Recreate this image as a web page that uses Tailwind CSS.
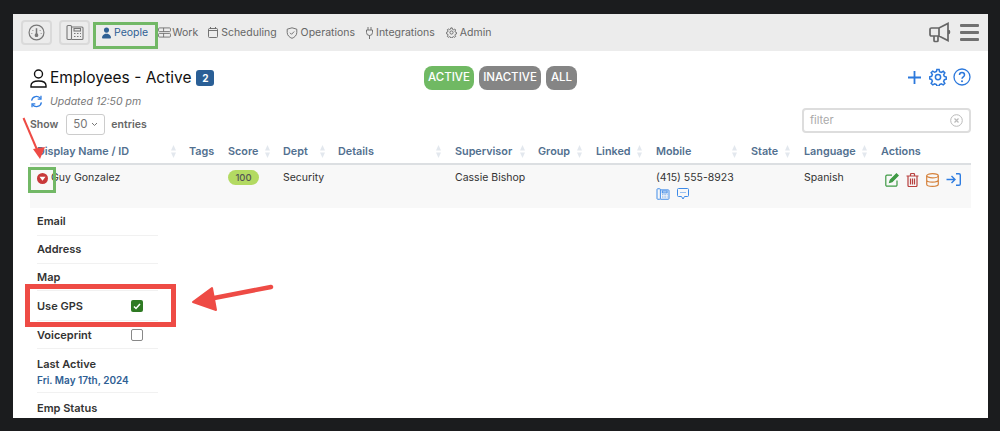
<!DOCTYPE html>
<html lang="en">
<head>
  <meta charset="UTF-8">
  <meta name="viewport" content="width=device-width, initial-scale=1.0">
  <title>Employees - Active</title>
  <script src="https://cdn.jsdelivr.net/npm/@tailwindcss/browser@4"></script>
</head>
<body class="bg-[#1b1c1e] h-[431px] overflow-hidden font-['Inter',sans-serif] text-[#333]">

  <div class="relative ml-[13px] mt-[14px] w-[975px] h-[404px] bg-white overflow-hidden">

    <!-- Top nav -->
    <nav class="h-[37px] bg-[#ececec] flex items-center pl-[8px] pr-[9px] text-[10.500px] text-[#666]">
      <button class="w-[31px] h-[25px] border-2 border-[#dadada] rounded-[4px] flex items-center justify-center">
        <svg class="w-[17px] h-[17px]" viewBox="0 0 16 16" fill="none" stroke="#777" stroke-width="1.100"><circle cx="8" cy="8" r="7"/><path d="M8 9.500V4M4.500 6v.5M11.500 6v.5M3.500 9v.5M12.500 9v.5" stroke-width="1.400"/><circle cx="8" cy="10.500" r="1.200" fill="#777"/></svg>
      </button>
      <button class="ml-[7px] w-[31px] h-[25px] border-2 border-[#dadada] rounded-[4px] flex items-center justify-center">
        <svg class="w-[18px] h-[17px]" viewBox="0 0 18 16" fill="none" stroke="#777" stroke-width="1.100"><rect x="1" y="1" width="4.500" height="14" rx="1"/><path d="M5.500 2.500H16a1 1 0 0 1 1 1V14a1 1 0 0 1-1 1H5.500"/><rect x="8" y="4" width="6.500" height="2.500"/><path d="M8 9h1.500M11 9h1.500M14 9h1M8 12h1.500M11 12h1.500M14 12h1"/></svg>
      </button>
      <a class="ml-[11px] flex items-center text-[#2f6094]">
        <svg class="w-[11px] h-[12px]" viewBox="0 0 16 16" fill="#2f6094"><path d="M3 16s-1.500 0-1.500-1.500S3 9 8 9s6.500 4 6.500 5.500S13 16 13 16H3z"/><circle cx="8" cy="3.800" r="3.700"/></svg>
        <span class="ml-[2px]">People</span>
      </a>
      <a class="ml-[10px] flex items-center">
        <svg class="w-[13px] h-[11px]" viewBox="0 0 14 12" fill="none" stroke="#666" stroke-width="0.9"><rect x="0.5" y="1" width="13" height="4" rx="1"/><rect x="0.5" y="7" width="13" height="4" rx="1"/><path d="M6 1v4M6 7v4"/></svg>
        <span class="ml-[1px]">Work</span>
      </a>
      <a class="ml-[10px] flex items-center">
        <svg class="w-[10px] h-[11px]" viewBox="0 0 10 11" fill="none" stroke="#666" stroke-width="0.9"><rect x="0.5" y="1.500" width="9" height="9" rx="1"/><path d="M0.500 3.500h9M2.500 0v2M7.500 0v2"/></svg>
        <span class="ml-[3px]">Scheduling</span>
      </a>
      <a class="ml-[9px] flex items-center">
        <svg class="w-[12px] h-[12px]" viewBox="0 0 12 12" fill="none" stroke="#666" stroke-width="0.9"><path d="M6 .8 1.200 2.200v3.300C1.200 8.400 3.500 10.400 6 11.300c2.500-.9 4.800-2.900 4.800-5.800V2.200L6 .8z"/><path d="m4 5.800 1.500 1.500L8.200 4.500"/></svg>
        <span class="ml-[3px]">Operations</span>
      </a>
      <a class="ml-[11px] flex items-center">
        <svg class="w-[7px] h-[12px]" viewBox="0 0 7 12" fill="none" stroke="#666" stroke-width="0.9"><path d="M2 0v3M5 0v3M.5 3h6v2.500a3 3 0 0 1-6 0V3zM3.500 8.500V12"/></svg>
        <span class="ml-[3px]">Integrations</span>
      </a>
      <a class="ml-[11px] flex items-center">
        <svg class="w-[11px] h-[11px]" viewBox="0 0 24 24" fill="none" stroke="#666" stroke-width="2"><circle cx="12" cy="12" r="3.500"/><path d="M10.500 2h3l.6 3 2.300 1 2.600-1.600 2.100 2.100L19.500 9l1 2.300 2.500.7v3l-2.500.6-1 2.300 1.600 2.600-2.100 2-2.600-1.500-2.300 1-.6 2h-3l-.6-2-2.300-1-2.600 1.500-2.100-2L4.500 17.600l-1-2.300L1 14.700v-3l2.500-.7 1-2.300-1.600-2.500L5 4.100l2.600 1.600 2.300-1 .6-2.700z"/></svg>
        <span class="ml-[3px]">Admin</span>
      </a>
      <div class="ml-auto flex items-center gap-[8px]">
        <svg class="w-[23px] h-[21px]" viewBox="0 0 23 21" fill="none" stroke="#666" stroke-width="1.700"><path d="M1 7.500a1.500 1.500 0 0 1 1.500-1.500H10l9-4.500v17L10 14H2.500A1.500 1.500 0 0 1 1 12.500v-5zM10 6v8M5 14v4.500a1 1 0 0 0 1 1h2a1 1 0 0 0 1-1V14M19 8c2 .5 2 3.500 0 4"/></svg>
        <svg class="w-[19px] h-[17px]" viewBox="0 0 19 17" fill="#707070"><rect width="19" height="3" rx="1"/><rect y="7" width="19" height="3" rx="1"/><rect y="14" width="19" height="3" rx="1"/></svg>
      </div>
    </nav>

    <!-- Page heading -->
    <div class="relative pl-[17px] pr-[17px] h-[56px]">
      <div class="flex items-center pt-[15px]">
        <svg class="w-[17px] h-[19px]" viewBox="0 0 17 19" fill="none" stroke="#111" stroke-width="1.400"><circle cx="8.500" cy="5" r="4"/><path d="M1 18v-1.500C1 13.500 4 12 8.500 12s7.500 1.500 7.500 4.500V18H1z"/></svg>
        <h1 class="ml-[3px] text-[15.500px] leading-[24px] text-[#111]">Employees - Active</h1>
        <span class="ml-[5px] w-[18px] h-[16px] rounded-[3px] bg-[#2a5f96] text-white text-[10px] font-bold flex items-center justify-center">2</span>
      </div>
      <div class="flex items-center mt-[4px] text-[10.500px] italic text-[#777]">
        <svg class="w-[13px] h-[13px]" viewBox="0 0 16 16" fill="none" stroke="#2f7de1" stroke-width="1.600"><path d="M2 7a6 6 0 0 1 11-2.500M14 9a6 6 0 0 1-11 2.500"/><path d="M13.500 1v4h-4M2.500 15v-4h4"/></svg>
        <span class="ml-[7px]">Updated 12:50 pm</span>
      </div>

      <div class="absolute left-[411px] top-[15px] flex gap-[5px] text-[11.500px] font-medium text-white">
        <span class="w-[50px] h-[24px] rounded-[8px] bg-[#70b963] flex items-center justify-center">ACTIVE</span>
        <span class="w-[62px] h-[24px] rounded-[8px] bg-[#858585] flex items-center justify-center">INACTIVE</span>
        <span class="w-[31px] h-[24px] rounded-[8px] bg-[#858585] flex items-center justify-center">ALL</span>
      </div>

      <div class="absolute right-[17px] top-[17px] flex items-center gap-[6px]">
        <svg class="w-[17px] h-[17px]" viewBox="0 0 17 17" stroke="#2b78dc" stroke-width="1.800"><path d="M8.500 2v13M2 8.500h13"/></svg>
        <svg class="w-[18px] h-[18px]" viewBox="0 0 24 24" fill="none" stroke="#2b78dc" stroke-width="2"><circle cx="12" cy="12" r="3.500"/><path d="M10.500 2h3l.6 3 2.300 1 2.600-1.600 2.100 2.100L19.500 9l1 2.300 2.500.7v3l-2.500.6-1 2.300 1.600 2.600-2.100 2-2.600-1.500-2.300 1-.6 2h-3l-.6-2-2.300-1-2.600 1.500-2.100-2L4.500 17.600l-1-2.300L1 14.700v-3l2.500-.7 1-2.300-1.600-2.500L5 4.100l2.600 1.600 2.300-1 .6-2.700z"/></svg>
        <svg class="w-[18px] h-[18px]" viewBox="0 0 18 18" fill="none" stroke="#2b78dc" stroke-width="1.300"><circle cx="9" cy="9" r="8"/><path d="M6.500 7c0-3.200 5-3.200 5 0 0 2-2.500 1.800-2.500 3.800" stroke-width="1.500"/><circle cx="9" cy="13.300" r="1" fill="#2b78dc" stroke="none"/></svg>
      </div>
    </div>

    <!-- Length + filter -->
    <div class="flex items-start justify-between pl-[17px] pr-[17px] h-[29px] text-[10.500px] font-semibold text-[#666]">
      <div class="flex items-center mt-[7px]">
        <span>Show</span>
        <div class="ml-[8px] w-[39px] h-[21px] border border-[#ccc] rounded-[3px] flex items-center justify-between px-[6px] text-[11.500px] font-normal text-[#777]">
          <span>50</span>
          <svg class="w-[7px] h-[5px]" viewBox="0 0 7 5" fill="none" stroke="#777"><path d="m1 1 2.500 2.500L6 1"/></svg>
        </div>
        <span class="ml-[6px]">entries</span>
      </div>
      <div class="mt-[1px] w-[169px] h-[25px] border-2 border-[#ddd] rounded-[4px] flex items-center justify-between pl-[6px] pr-[6px] font-normal text-[#aaa] text-[11px]">
        <span>filter</span>
        <svg class="w-[13px] h-[13px]" viewBox="0 0 13 13" fill="none" stroke="#bbb"><circle cx="6.500" cy="6.500" r="5.800"/><path d="m4.500 4.500 4 4m0-4-4 4" stroke-width="1.200"/></svg>
      </div>
    </div>

    <!-- Table -->
    <div class="ml-[17px] w-[941px]">
      <div class="grid grid-cols-[159px_39px_55px_55px_117px_83px_58px_60px_95px_53px_77px_90px] h-[29px] items-center border-b-2 border-[#dcdfe2] pt-[5px] text-[10.800px] font-semibold text-[#52708f]">
        <div class="flex justify-between pl-[7px] pr-[13px]"><span>Display Name / ID</span><svg class="w-[5px] h-[13px] mt-[1px]" viewBox="0 0 5 13" fill="#e3e8ee"><path d="M2.500 0 5 5.500H0zM2.500 13 0 7.500h5z"/></svg></div>
        <div>Tags</div>
        <div class="flex justify-between pr-[13px]"><span>Score</span><svg class="w-[5px] h-[13px] mt-[1px]" viewBox="0 0 5 13" fill="#e3e8ee"><path d="M2.500 0 5 5.500H0zM2.500 13 0 7.500h5z"/></svg></div>
        <div class="flex justify-between pr-[13px]"><span>Dept</span><svg class="w-[5px] h-[13px] mt-[1px]" viewBox="0 0 5 13" fill="#e3e8ee"><path d="M2.500 0 5 5.500H0zM2.500 13 0 7.500h5z"/></svg></div>
        <div class="flex justify-between pr-[14px]"><span>Details</span><svg class="w-[5px] h-[13px] mt-[1px]" viewBox="0 0 5 13" fill="#e3e8ee"><path d="M2.500 0 5 5.500H0zM2.500 13 0 7.500h5z"/></svg></div>
        <div class="flex justify-between pr-[13px]"><span>Supervisor</span><svg class="w-[5px] h-[13px] mt-[1px]" viewBox="0 0 5 13" fill="#e3e8ee"><path d="M2.500 0 5 5.500H0zM2.500 13 0 7.500h5z"/></svg></div>
        <div class="flex justify-between pr-[14px]"><span>Group</span><svg class="w-[5px] h-[13px] mt-[1px]" viewBox="0 0 5 13" fill="#e3e8ee"><path d="M2.500 0 5 5.500H0zM2.500 13 0 7.500h5z"/></svg></div>
        <div class="flex justify-between pr-[14px]"><span>Linked</span><svg class="w-[5px] h-[13px] mt-[1px]" viewBox="0 0 5 13" fill="#e3e8ee"><path d="M2.500 0 5 5.500H0zM2.500 13 0 7.500h5z"/></svg></div>
        <div class="flex justify-between pr-[14px]"><span>Mobile</span><svg class="w-[5px] h-[13px] mt-[1px]" viewBox="0 0 5 13" fill="#e3e8ee"><path d="M2.500 0 5 5.500H0zM2.500 13 0 7.500h5z"/></svg></div>
        <div class="flex justify-between pr-[14px]"><span>State</span><svg class="w-[5px] h-[13px] mt-[1px]" viewBox="0 0 5 13" fill="#e3e8ee"><path d="M2.500 0 5 5.500H0zM2.500 13 0 7.500h5z"/></svg></div>
        <div class="flex justify-between pr-[14px]"><span>Language</span><svg class="w-[5px] h-[13px] mt-[1px]" viewBox="0 0 5 13" fill="#e3e8ee"><path d="M2.500 0 5 5.500H0zM2.500 13 0 7.500h5z"/></svg></div>
        <div>Actions</div>
      </div>

      <div class="grid grid-cols-[159px_39px_55px_55px_117px_83px_58px_60px_95px_53px_77px_90px] h-[43px] bg-[#f8f8f8] pt-[6px] text-[10.500px] leading-[14px] text-[#333]">
        <div class="flex items-start pl-[7px]">
          <svg class="w-[11px] h-[11px] mt-[2px]" viewBox="0 0 11 11"><circle cx="5.500" cy="5.500" r="5.500" fill="#c8393a"/><path d="M2.500 3.800h6L5.500 7.800z" fill="#fff"/></svg>
          <span class="ml-[3px]">Guy Gonzalez</span>
        </div>
        <div></div>
        <div><span class="block w-[31px] h-[15px] -mt-[1px] rounded-full bg-[#b3da62] text-center text-[9.500px] leading-[16px] font-medium text-[#555]">100</span></div>
        <div>Security</div>
        <div></div>
        <div>Cassie Bishop</div>
        <div></div>
        <div></div>
        <div>
          <div>(415) 555-8923</div>
          <div class="flex items-center gap-[7px] mt-[3px]">
            <svg class="w-[14px] h-[12px]" viewBox="0 0 18 16" fill="none" stroke="#3d8ae8" stroke-width="1.300"><rect x="1" y="1" width="4.500" height="14" rx="1"/><path d="M5.500 2.500H16a1 1 0 0 1 1 1V14a1 1 0 0 1-1 1H5.500"/><rect x="8" y="4" width="6.500" height="2.500"/><path d="M8 9h1.500M11 9h1.500M14 9h1M8 12h1.500M11 12h1.500M14 12h1"/></svg>
            <svg class="w-[12px] h-[12px]" viewBox="0 0 12 12" fill="none" stroke="#3d8ae8" stroke-width="1"><path d="M1.500.5h9a1 1 0 0 1 1 1v6a1 1 0 0 1-1 1H7.500L6 11 4.500 8.500h-3a1 1 0 0 1-1-1v-6a1 1 0 0 1 1-1z"/><path d="M3.500 4.500h1M5.500 4.500h1M7.500 4.500h1"/></svg>
          </div>
        </div>
        <div></div>
        <div>Spanish</div>
        <div class="flex items-start gap-[7px] pl-[4px] pt-[2px]">
          <svg class="w-[14px] h-[14px]" viewBox="0 0 14 14" fill="none" stroke="#3f9a45" stroke-width="1.200"><path d="M12 7.500V12a1.200 1.200 0 0 1-1.200 1.200H2A1.200 1.200 0 0 1 .8 12V3.300A1.200 1.200 0 0 1 2 2.100h5"/><path d="M11.500.8l1.700 1.700L7 8.700l-2.400.7.700-2.400 6.200-6.200z" fill="#3f9a45"/></svg>
          <svg class="w-[13px] h-[14px]" viewBox="0 0 13 14" fill="none" stroke="#b8403f" stroke-width="1.200"><path d="M.5 3h12M4.500 3V1.500a1 1 0 0 1 1-1h2a1 1 0 0 1 1 1V3M2 3v9.500a1 1 0 0 0 1 1h7a1 1 0 0 0 1-1V3M4.500 5.500v6M6.500 5.500v6M8.500 5.500v6"/></svg>
          <svg class="w-[13px] h-[14px]" viewBox="0 0 13 14" fill="none" stroke="#d5823c" stroke-width="1.200"><ellipse cx="6.500" cy="2.700" rx="5.800" ry="2.100"/><path d="M.7 2.700v8.600c0 1.200 2.600 2.100 5.800 2.100s5.800-.9 5.800-2.100V2.700M.7 7c0 1.200 2.600 2.100 5.800 2.100S12.300 8.200 12.300 7"/></svg>
          <svg class="w-[15px] h-[13px]" viewBox="0 0 15 13" fill="none" stroke="#2f7de1" stroke-width="1.400"><path d="M.5 6.500h8M5.500 3l3.500 3.500L5.500 10"/><path d="M10 .7h3a1.300 1.300 0 0 1 1.300 1.300v9a1.300 1.300 0 0 1-1.300 1.300h-3"/></svg>
        </div>
      </div>

      <!-- Expanded detail list -->
      <div class="ml-[7px] w-[121px] text-[11px] font-semibold text-[#333]">
        <div class="h-[28px] pt-[6px] leading-[14px] border-b border-[#f1f1f1]">Email</div>
        <div class="h-[28px] pt-[6px] leading-[14px] border-b border-[#f1f1f1]">Address</div>
        <div class="h-[27px] pt-[6px] leading-[14px] border-b border-[#f1f1f1]">Map</div>
        <div class="h-[30px] pt-[1px] flex items-center justify-between pr-[15px] border-b border-[#f1f1f1]">
          <span>Use GPS</span>
          <span class="w-[12px] h-[12px] rounded-[2px] bg-[#2f7a23] flex items-center justify-center">
            <svg class="w-[8px] h-[7px]" viewBox="0 0 8 7" fill="none" stroke="#fff" stroke-width="1.500"><path d="m1 3.500 2 2L7 1"/></svg>
          </span>
        </div>
        <div class="h-[28px] pt-[1px] flex items-center justify-between pr-[15px] border-b border-[#f1f1f1]">
          <span>Voiceprint</span>
          <span class="w-[12px] h-[12px] rounded-[2px] border-[1.500px] border-[#888]"></span>
        </div>
        <div class="h-[44px] pt-[8px] leading-[14px] border-b border-[#f1f1f1]">
          <div>Last Active</div>
          <div class="mt-[2px] text-[#2f6094] text-[10px]">Fri. May 17th, 2024</div>
        </div>
        <div class="pt-[8px] leading-[14px]">Emp Status</div>
      </div>
    </div>

    <!-- Annotations over the screenshot -->
    <div class="absolute left-[80px] top-[8px] w-[65px] h-[27px] border-[3px] border-[#72b866]"></div>
    <div class="absolute left-[15px] top-[153px] w-[28px] h-[26px] border-[3px] border-[#72b866]"></div>
    <div class="absolute left-[12px] top-[270px] w-[151px] h-[43px] border-[5px] border-[#ee4b45]"></div>
    <svg class="absolute left-0 top-0 w-[975px] h-[404px]" viewBox="0 0 975 404" fill="none">
      <path d="M10.500 104 25 138" stroke="#ee4b45" stroke-width="2"/>
      <path d="M20 135l7 10 5-12z" fill="#ee4b45"/>
      <path d="M258 273l-62 12" stroke="#ee4b45" stroke-width="4.500" stroke-linecap="round"/>
      <path d="M180 288l19-14 4 22z" fill="#ee4b45" stroke="#ee4b45" stroke-width="2" stroke-linejoin="round"/>
    </svg>
  </div>

</body>
</html>
